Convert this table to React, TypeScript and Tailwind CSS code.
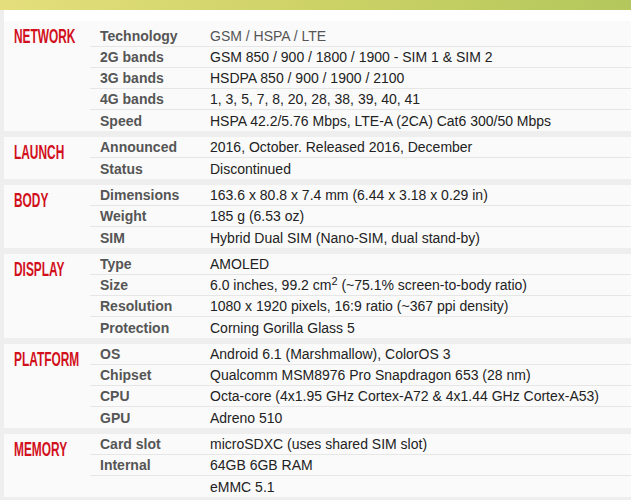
type Spec = { label: string; value: React.ReactNode; muted?: boolean };
type Section = { title: string; rows: Spec[]; padTop?: boolean };

const sections: Section[] = [
  {
    title: "NETWORK",
    padTop: true,
    rows: [
      { label: "Technology", value: "GSM / HSPA / LTE", muted: true },
      { label: "2G bands", value: "GSM 850 / 900 / 1800 / 1900 - SIM 1 & SIM 2" },
      { label: "3G bands", value: "HSDPA 850 / 900 / 1900 / 2100" },
      { label: "4G bands", value: "1, 3, 5, 7, 8, 20, 28, 38, 39, 40, 41" },
      { label: "Speed", value: "HSPA 42.2/5.76 Mbps, LTE-A (2CA) Cat6 300/50 Mbps" },
    ],
  },
  {
    title: "LAUNCH",
    rows: [
      { label: "Announced", value: "2016, October. Released 2016, December" },
      { label: "Status", value: "Discontinued" },
    ],
  },
  {
    title: "BODY",
    rows: [
      { label: "Dimensions", value: "163.6 x 80.8 x 7.4 mm (6.44 x 3.18 x 0.29 in)" },
      { label: "Weight", value: "185 g (6.53 oz)" },
      { label: "SIM", value: "Hybrid Dual SIM (Nano-SIM, dual stand-by)" },
    ],
  },
  {
    title: "DISPLAY",
    rows: [
      { label: "Type", value: "AMOLED" },
      {
        label: "Size",
        value: (
          <>
            6.0 inches, 99.2 cm<sup className="text-[11px]">2</sup> (~75.1% screen-to-body ratio)
          </>
        ),
      },
      { label: "Resolution", value: "1080 x 1920 pixels, 16:9 ratio (~367 ppi density)" },
      { label: "Protection", value: "Corning Gorilla Glass 5" },
    ],
  },
  {
    title: "PLATFORM",
    rows: [
      { label: "OS", value: "Android 6.1 (Marshmallow), ColorOS 3" },
      { label: "Chipset", value: "Qualcomm MSM8976 Pro Snapdragon 653 (28 nm)" },
      { label: "CPU", value: "Octa-core (4x1.95 GHz Cortex-A72 & 4x1.44 GHz Cortex-A53)" },
      { label: "GPU", value: "Adreno 510" },
    ],
  },
  {
    title: "MEMORY",
    rows: [
      { label: "Card slot", value: "microSDXC (uses shared SIM slot)" },
      { label: "Internal", value: "64GB 6GB RAM" },
      { label: "", value: "eMMC 5.1" },
    ],
  },
];

export default function App() {
  return (
    <div className="min-h-screen w-[631px] bg-[#eeeeee] font-['Liberation_Sans',Arial,sans-serif] overflow-hidden">
      {/* top accent bar */}
      <div className="h-[10px] bg-gradient-to-r from-[#e4df7c] via-[#cdd266] to-[#b3c75c]"></div>

      <div className="ml-[4px] bg-white">
        <div className="h-[11px] bg-white"></div>

        {sections.map((s) => (
          <div key={s.title}>
            <div className="flex bg-[#fafafa]">
              <div className="w-[86px] shrink-0 pl-[10px] pt-[5px]">
                <span className="inline-block origin-left scale-x-[0.61] text-[19.5px] leading-none font-bold text-[#d2101c] whitespace-nowrap">
                  {s.title}
                </span>
              </div>
              <div className={`flex-1 ${s.padTop ? "pt-[5px]" : ""}`}>
                {s.rows.map((r, i) => (
                  <div
                    key={i}
                    className={`flex h-[21px] items-center text-[14px] leading-[20px] ${
                      i < s.rows.length - 1 ? "border-b border-[#e6e6e6]" : ""
                    }`}
                  >
                    <div className="w-[110px] shrink-0 pl-[10px] font-bold text-[#555555]">{r.label}</div>
                    <div className={`pl-[10px] whitespace-nowrap ${r.muted ? "text-[#555555]" : "text-[#222222]"}`}>
                      {r.value}
                    </div>
                  </div>
                ))}
              </div>
            </div>
            <div className="h-[6px] bg-[#eeeeee]"></div>
          </div>
        ))}
      </div>
    </div>
  );
}
